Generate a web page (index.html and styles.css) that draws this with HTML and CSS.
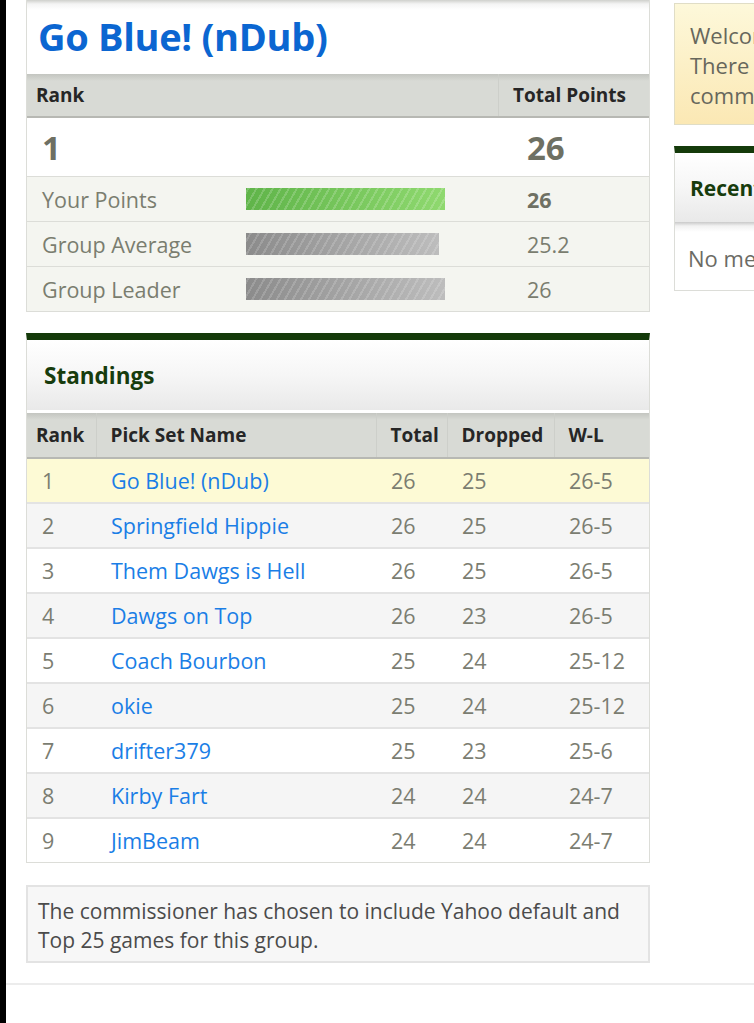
FILE: index.html
```html
<!DOCTYPE html>
<html lang="en">
<head>
  <meta charset="UTF-8">
  <meta name="viewport" content="width=device-width, initial-scale=1.0">
  <title>Go Blue! (nDub) - Standings</title>
  <link rel="stylesheet" href="styles.css">
</head>
<body>
  <div class="page">
    <div class="layout">
      <main class="main">
        <!-- pick set summary -->
        <section class="card summary">
          <h1 class="pickset-title">Go Blue! (nDub)</h1>
          <div class="summary-head">
            <span class="head-rank">Rank</span>
            <span class="head-total">Total Points</span>
          </div>
          <div class="summary-rank">
            <span class="big-rank">1</span>
            <span class="big-total">26</span>
          </div>
          <div class="stat-row">
            <span class="stat-label">Your Points</span>
            <span class="bar-cell"><span class="bar bar-green" style="width: 199px"></span></span>
            <span class="stat-value strong">26</span>
          </div>
          <div class="stat-row">
            <span class="stat-label">Group Average</span>
            <span class="bar-cell"><span class="bar bar-gray" style="width: 193px"></span></span>
            <span class="stat-value">25.2</span>
          </div>
          <div class="stat-row">
            <span class="stat-label">Group Leader</span>
            <span class="bar-cell"><span class="bar bar-gray" style="width: 199px"></span></span>
            <span class="stat-value">26</span>
          </div>
        </section>

        <!-- group standings -->
        <section class="panel standings">
          <h2 class="panel-title">Standings</h2>
          <table class="standings-table">
            <colgroup>
              <col class="col-rank">
              <col class="col-name">
              <col class="col-total">
              <col class="col-dropped">
              <col class="col-wl">
            </colgroup>
            <thead>
              <tr>
                <th>Rank</th>
                <th>Pick Set Name</th>
                <th>Total</th>
                <th>Dropped</th>
                <th>W-L</th>
              </tr>
            </thead>
            <tbody>
              <tr class="mine"><td>1</td><td><a href="#">Go Blue! (nDub)</a></td><td>26</td><td>25</td><td>26-5</td></tr>
              <tr><td>2</td><td><a href="#">Springfield Hippie</a></td><td>26</td><td>25</td><td>26-5</td></tr>
              <tr><td>3</td><td><a href="#">Them Dawgs is Hell</a></td><td>26</td><td>25</td><td>26-5</td></tr>
              <tr><td>4</td><td><a href="#">Dawgs on Top</a></td><td>26</td><td>23</td><td>26-5</td></tr>
              <tr><td>5</td><td><a href="#">Coach Bourbon</a></td><td>25</td><td>24</td><td>25-12</td></tr>
              <tr><td>6</td><td><a href="#">okie</a></td><td>25</td><td>24</td><td>25-12</td></tr>
              <tr><td>7</td><td><a href="#">drifter379</a></td><td>25</td><td>23</td><td>25-6</td></tr>
              <tr><td>8</td><td><a href="#">Kirby Fart</a></td><td>24</td><td>24</td><td>24-7</td></tr>
              <tr><td>9</td><td><a href="#">JimBeam</a></td><td>24</td><td>24</td><td>24-7</td></tr>
            </tbody>
          </table>
        </section>

        <p class="note">The commissioner has chosen to include Yahoo default and Top 25 games for this group.</p>
      </main>

      <aside class="side">
        <div class="welcome">Welcome to the group!<br>There are no messages from the<br>commissioner yet.</div>
        <section class="panel recent">
          <h2 class="panel-title">Recent Messages</h2>
          <div class="recent-body">No messages yet.</div>
        </section>
      </aside>
    </div>
    <div class="footer-line"></div>
  </div>
</body>
</html>
```

FILE: styles.css
```css
body {
  margin: 0;
  background: #fff;
  font-family: "Open Sans", "Liberation Sans", sans-serif;
  color: #7a7c70;
}

.page {
  border-left: 6px solid #000;
  min-height: 1023px;
  overflow: hidden;
}

.layout {
  display: flex;
  gap: 24px;
  padding-left: 20px;
}

.main {
  width: 624px;
  flex: none;
}

.side {
  width: 240px;
  flex: none;
  padding-top: 3px;
}

/* summary card */
.card {
  border: 1px solid #dcddd8;
  border-top: none;
}

.pickset-title {
  margin: 0;
  height: 74px;
  padding: 0 11px 2px;
  box-sizing: border-box;
  display: flex;
  align-items: center;
  font-size: 38px;
  font-weight: 700;
  letter-spacing: -0.3px;
  color: #0b66d1;
  background: linear-gradient(#cfd0cc 0, #f4f4f4 4px, #fff 10px);
}

.summary-head {
  display: grid;
  grid-template-columns: 471px 152px;
  height: 42px;
  background: linear-gradient(#c3c5c0 0, #d8dad5 7px);
  border-bottom: 2px solid #b7b8b3;
  font-size: 19px;
  font-weight: 700;
  color: #262626;
}

.head-rank {
  display: flex;
  align-items: center;
  padding-left: 9px;
}

.head-total {
  display: flex;
  align-items: center;
  padding-left: 14px;
  border-left: 1px solid #cdcfca;
}

.summary-rank {
  display: grid;
  grid-template-columns: 471px 152px;
  height: 58px;
  align-items: center;
  border-bottom: 1px solid #dcddd8;
  font-size: 33px;
  font-weight: 700;
  color: #6e7063;
}

.big-rank {
  padding-left: 15px;
}

.big-total {
  padding-left: 29px;
}

.stat-row {
  display: grid;
  grid-template-columns: 219px 252px 152px;
  height: 44px;
  align-items: center;
  background: #f4f5f0;
  border-bottom: 1px solid #dcddd8;
  font-size: 21.5px;
}

.stat-row:last-child {
  border-bottom: none;
}

.stat-label {
  padding-left: 15px;
  color: #7a7d6f;
}

.bar-cell {
  display: flex;
}

.bar {
  display: block;
  height: 22px;
}

.bar-green {
  background:
    repeating-linear-gradient(-60deg, rgba(255,255,255,0) 0 5px, rgba(255,255,255,0.18) 5px 7px),
    linear-gradient(to right, #5fb449, #8fd96f);
}

.bar-gray {
  background:
    repeating-linear-gradient(-60deg, rgba(255,255,255,0) 0 5px, rgba(255,255,255,0.16) 5px 7px),
    linear-gradient(to right, #8b8b8b, #bdbdbd);
}

.stat-value {
  padding-left: 29px;
  color: #7a7d6f;
}

.stat-value.strong {
  font-weight: 700;
  color: #6e7063;
}

/* panels with green top bar */
.panel {
  border: 1px solid #dcddd8;
  border-top: 7px solid #143a0a;
}

.standings {
  margin-top: 21px;
}

.panel-title {
  margin: 0;
  height: 70px;
  padding-left: 17px;
  display: flex;
  align-items: center;
  font-size: 22.5px;
  font-weight: 700;
  color: #173c0d;
  background: linear-gradient(#fff 0, #f6f6f6 50%, #e9e9e9 100%);
  border-bottom: 3px solid #fff;
}

.standings-table {
  width: 100%;
  border-collapse: collapse;
  table-layout: fixed;
  font-size: 21.5px;
}

.col-rank { width: 69px; }
.col-name { width: 280px; }
.col-total { width: 71px; }
.col-dropped { width: 107px; }
.col-wl { width: 95px; }

.standings-table th {
  height: 44px;
  padding: 0 0 0 14px;
  text-align: left;
  font-size: 19px;
  font-weight: 700;
  color: #262626;
  background: linear-gradient(#c3c5c0 0, #d8dad5 7px);
  border-bottom: 2px solid #b7b8b3;
  border-left: 1px solid #cdcfca;
}

.standings-table th:first-child {
  padding-left: 9px;
  border-left: none;
}

.standings-table td {
  height: 43px;
  padding: 0 0 0 15px;
  color: #7b7d71;
  border-bottom: 2px solid #e3e3e3;
}

.standings-table td:first-child {
  padding-left: 15px;
}

.standings-table tr:last-child td {
  border-bottom: none;
}

.standings-table tbody tr:nth-child(even) td {
  background: #f5f5f5;
}

.standings-table tr.mine td {
  background: #fdfad5;
}

.standings-table a {
  color: #1a7ee6;
  text-decoration: none;
}

.note {
  margin: 22px 0 0;
  padding: 10px 10px 6px;
  background: #f7f7f7;
  border: 2px solid #e3e3e3;
  font-size: 21px;
  line-height: 29px;
  color: #4b4b4b;
}

.footer-line {
  margin-top: 20px;
  border-top: 2px solid #ececec;
}

/* side column */
.welcome {
  padding: 16px 15px 14px;
  border: 1px solid #e0ddc6;
  background: linear-gradient(#fdf8da, #fbe8b4);
  font-size: 22px;
  line-height: 30px;
  color: #67675c;
  white-space: nowrap;
}

.recent {
  margin-top: 21px;
}

.recent .panel-title {
  height: 69px;
  padding-left: 15px;
  font-size: 21px;
  border-bottom: none;
}

.recent-body {
  padding: 4px 13px 0;
  height: 64px;
  display: flex;
  align-items: center;
  font-size: 22px;
  color: #6b6b65;
  background: linear-gradient(#c9c9c9 0, #f2f2f2 4px, #fff 10px);
}
```
